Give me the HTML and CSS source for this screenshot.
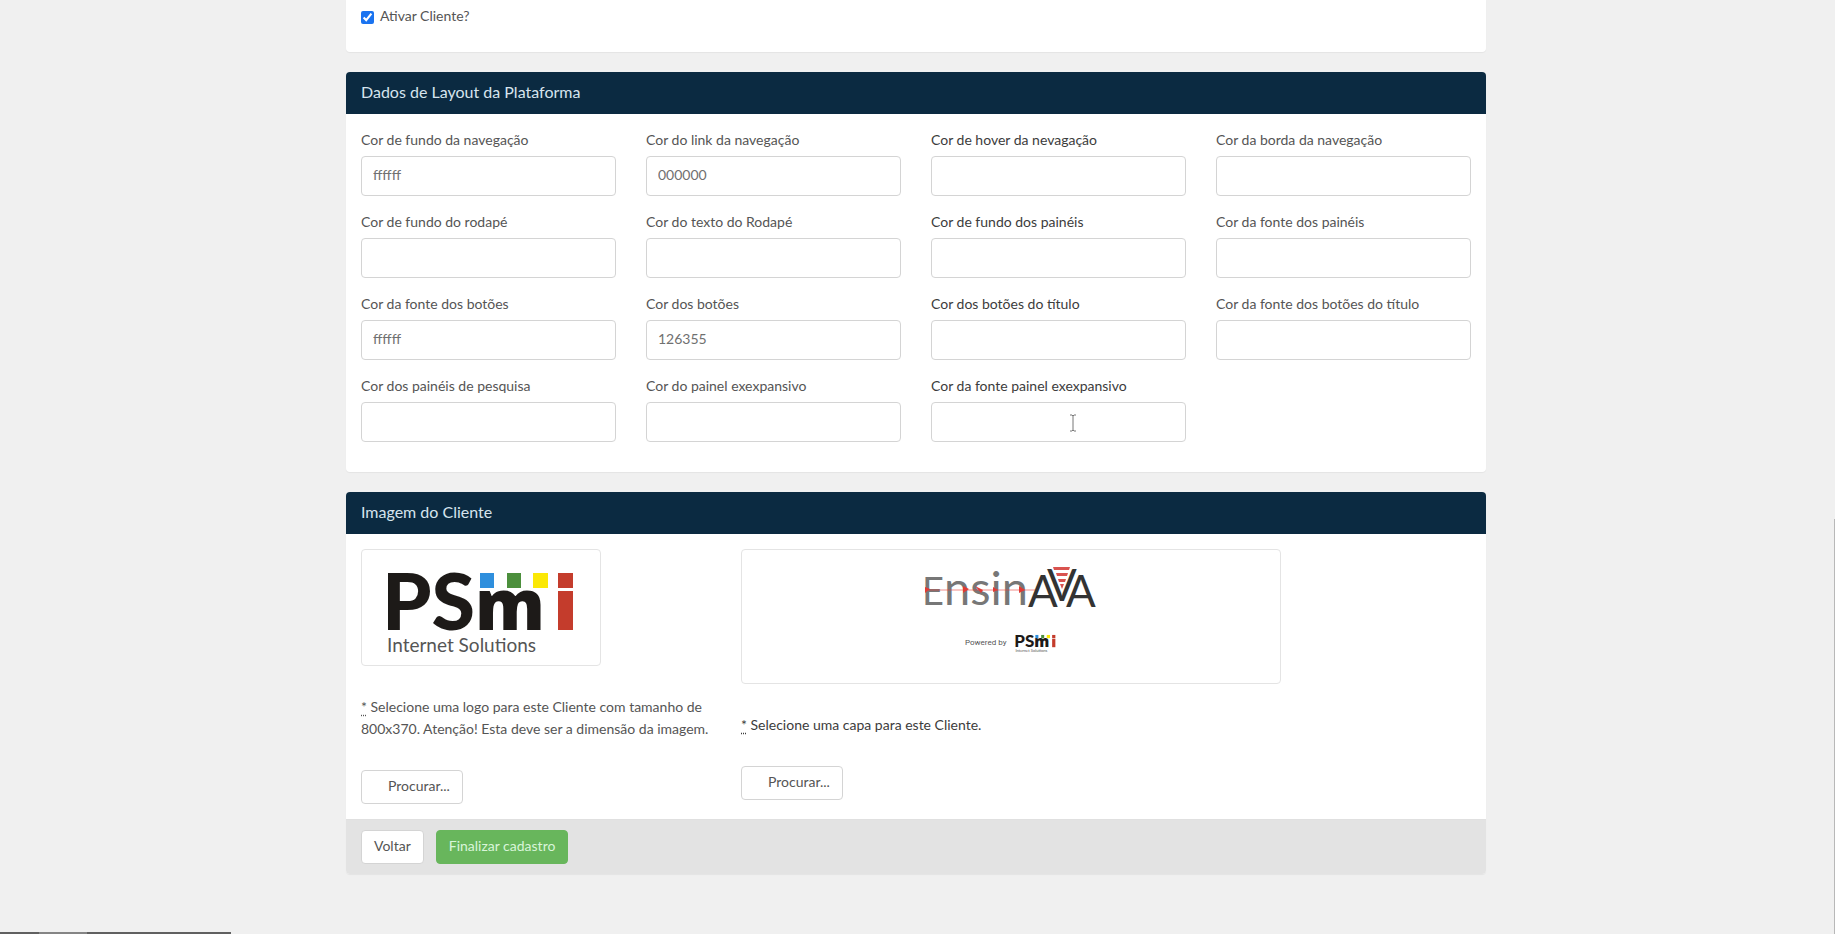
FILE: index.html
```html
<!DOCTYPE html>
<html lang="pt-BR">
<head>
    <meta charset="UTF-8">
    <meta name="viewport" content="width=device-width, initial-scale=1.0">
    <title>Cadastro de Cliente</title>
    <link rel="stylesheet" href="styles.css">
</head>
<body>
    <form class="container">
        <div class="panel panel-first">
            <label class="checkbox" for="ativar"><input type="checkbox" id="ativar" checked> Ativar Cliente?</label>
        </div>

        <div class="panel">
            <h3 class="panel-heading">Dados de Layout da Plataforma</h3>
            <div class="panel-body field-grid">
                <div class="form-group">
                    <label for="nav-fundo">Cor de fundo da navegação</label>
                    <input type="text" id="nav-fundo" value="ffffff">
                </div>
                <div class="form-group">
                    <label for="nav-link">Cor do link da navegação</label>
                    <input type="text" id="nav-link" value="000000">
                </div>
                <div class="form-group">
                    <label for="nav-hover">Cor de hover da nevagação</label>
                    <input type="text" id="nav-hover">
                </div>
                <div class="form-group">
                    <label for="nav-borda">Cor da borda da navegação</label>
                    <input type="text" id="nav-borda">
                </div>
                <div class="form-group">
                    <label for="rodape-fundo">Cor de fundo do rodapé</label>
                    <input type="text" id="rodape-fundo">
                </div>
                <div class="form-group">
                    <label for="rodape-texto">Cor do texto do Rodapé</label>
                    <input type="text" id="rodape-texto">
                </div>
                <div class="form-group">
                    <label for="painel-fundo">Cor de fundo dos painéis</label>
                    <input type="text" id="painel-fundo">
                </div>
                <div class="form-group">
                    <label for="painel-fonte">Cor da fonte dos painéis</label>
                    <input type="text" id="painel-fonte">
                </div>
                <div class="form-group">
                    <label for="botao-fonte">Cor da fonte dos botões</label>
                    <input type="text" id="botao-fonte" value="ffffff">
                </div>
                <div class="form-group">
                    <label for="botao-cor">Cor dos botões</label>
                    <input type="text" id="botao-cor" value="126355">
                </div>
                <div class="form-group">
                    <label for="titulo-botao">Cor dos botões do título</label>
                    <input type="text" id="titulo-botao">
                </div>
                <div class="form-group">
                    <label for="titulo-fonte">Cor da fonte dos botões do título</label>
                    <input type="text" id="titulo-fonte">
                </div>
                <div class="form-group">
                    <label for="pesquisa">Cor dos painéis de pesquisa</label>
                    <input type="text" id="pesquisa">
                </div>
                <div class="form-group">
                    <label for="expansivo">Cor do painel exexpansivo</label>
                    <input type="text" id="expansivo">
                </div>
                <div class="form-group">
                    <label for="expansivo-fonte">Cor da fonte painel exexpansivo</label>
                    <input type="text" id="expansivo-fonte">
                    <svg class="cursor" width="8" height="18" viewBox="0 0 8 18" aria-hidden="true">
                        <path d="M1 1h2l1 1 1-1h2M4 2v14M1 17h2l1-1 1 1h2" fill="none" stroke="#777"/>
                    </svg>
                </div>
            </div>
        </div>

        <div class="panel">
            <h3 class="panel-heading">Imagem do Cliente</h3>
            <div class="panel-body image-row">
                <div class="image-col">
                    <div class="thumbnail thumbnail-logo">
                        <svg viewBox="0 0 238 115" role="img" aria-label="PSmi Internet Solutions">
                            <g id="psmi">
                                <text class="logo-bold" x="20" y="80">PS</text>
                                <text class="logo-m" x="113" y="80">m</text>
                                <rect x="118" y="23" width="14" height="15" fill="#2f8fdd"/>
                                <rect x="145" y="23" width="14" height="15" fill="#4c8f3c"/>
                                <rect x="171" y="23" width="15" height="15" fill="#fbe806"/>
                                <rect x="196" y="23" width="15" height="15" fill="#c43c2c"/>
                                <rect x="196" y="41" width="15" height="39" fill="#c43c2c"/>
                                <text class="logo-sub" x="25" y="102">Internet Solutions</text>
                            </g>
                        </svg>
                    </div>
                    <p class="help"><abbr title="Obrigatório">*</abbr> Selecione uma logo para este Cliente com tamanho de 800x370. Atenção! Esta deve ser a dimensão da imagem.</p>
                    <button type="button" class="btn btn-file">Procurar...</button>
                </div>
                <div class="image-col image-col-wide">
                    <div class="thumbnail thumbnail-capa">
                        <svg viewBox="0 0 538 133" role="img" aria-label="EnsinAVA">
                            <text class="ensin" x="180" y="55">E<tspan class="ensin-small">nsin</tspan></text>
                            <path d="M183 40h110" stroke="#e8403a" stroke-opacity=".6"/>
                            <path d="M183 37l5 2-5 4zM221 36l6 3-6 4zM233 36l8 4-2 3zM251 37l5 3-5 2zM277 36l6 4-6 3z" fill="#e03a34"/>
                            <text class="ava" x="286" y="57">A</text>
                            <text class="ava" x="305" y="51">V</text>
                            <text class="ava" x="324" y="57">A</text>
                            <path d="M311 17h17l-1 3h-15zM314 23h12l-1 3h-10zM316 29h8l-1 3h-6zM318 34h4l-2 5z" fill="#d9534f"/>
                            <text class="powered" x="223" y="95">Powered by</text>
                            <use href="#psmi" transform="translate(268 80) scale(.215)"/>
                        </svg>
                    </div>
                    <p class="help help-dark"><abbr title="Obrigatório">*</abbr> Selecione uma capa para este Cliente.</p>
                    <button type="button" class="btn btn-file">Procurar...</button>
                </div>
            </div>
            <div class="panel-footer">
                <button type="button" class="btn">Voltar</button>
                <button type="submit" class="btn btn-success">Finalizar cadastro</button>
            </div>
        </div>
    </form>

    <div class="scroll-thumb"></div>
    <div class="status-bar"><span></span></div>
</body>
</html>
```
FILE: styles.css
```css
* {
    box-sizing: border-box;
}

body {
    margin: 0;
    padding-right: 3px;
    background-color: #f0f0f0;
    color: #555;
    font-family: Lato, sans-serif;
    font-size: 14px;
    line-height: 22px;
}

.container {
    max-width: 1140px;
    margin: 0 auto;
}

.panel {
    margin-bottom: 20px;
    background-color: #fff;
    border-radius: 4px;
    box-shadow: 0 1px 1px rgba(0, 0, 0, 0.05);
}

.panel-first {
    padding: 5px 15px 25px;
    border-radius: 0 0 4px 4px;
}

.checkbox {
    display: flex;
    align-items: center;
    gap: 6px;
}

.checkbox input {
    width: 13px;
    height: 13px;
    margin: 2px 0 0;
    accent-color: #1a73f0;
}

.panel-heading {
    margin: 0;
    padding: 9px 15px 11px;
    background-color: #0b2a41;
    border-radius: 4px 4px 0 0;
    color: #d6e4ee;
    font-size: 16px;
    font-weight: 400;
}

.panel-body {
    padding: 15px;
}

.field-grid {
    display: grid;
    grid-template-columns: repeat(4, 1fr);
    column-gap: 30px;
}

.form-group {
    position: relative;
    margin-bottom: 15px;
}

.form-group label {
    display: block;
    margin-bottom: 5px;
}

.form-group:nth-child(4n+3) label,
.help-dark {
    color: #3c3c3c;
}

.form-group input {
    display: block;
    width: 100%;
    height: 40px;
    padding: 0 11px 3px;
    border: 1px solid #d4d4d4;
    border-radius: 4px;
    background-color: #fff;
    color: #707070;
    font: inherit;
}

/* text cursor over the last field */
.cursor {
    position: absolute;
    left: 138px;
    top: 39px;
}

.image-row {
    display: flex;
    align-items: flex-start;
    gap: 30px;
}

.image-col {
    width: 350px;
}

.image-col-wide {
    width: 540px;
}

.thumbnail {
    border: 1px solid #e4e4e4;
    border-radius: 4px;
}

.thumbnail svg {
    display: block;
    width: 100%;
}

.thumbnail-logo {
    width: 240px;
}

.logo-bold {
    fill: #1d1a18;
    font-size: 79px;
    font-weight: 900;
}

.logo-m {
    fill: #1d1a18;
    font-family: "Open Sans", sans-serif;
    font-size: 70px;
    font-weight: 800;
}

.logo-sub {
    fill: #555;
    font-size: 19px;
}

.ensin {
    fill: #777;
    font-size: 38px;
}

.ensin-small {
    font-size: 47px;
}

.ava {
    fill: #333;
    font-size: 44px;
}

.powered {
    fill: #555;
    font-family: Roboto, sans-serif;
    font-size: 8px;
}

.help {
    margin: 30px 0;
}

.help abbr {
    text-decoration: underline dotted;
    text-underline-offset: 3px;
}

.btn {
    height: 34px;
    padding: 0 12px 2px;
    border: 1px solid #d4d4d4;
    border-radius: 4px;
    background-color: #fff;
    color: #555;
    font: inherit;
    cursor: pointer;
}

.btn-file {
    display: block;
    padding-left: 26px;
}

.btn-success {
    border-color: #68b65c;
    background-color: #68b65c;
    color: #d9f5d9;
}

.panel-footer {
    display: flex;
    gap: 12px;
    padding: 10px 15px;
    border-top: 1px solid #e0e0e0;
    border-radius: 0 0 4px 4px;
    background-color: #e3e3e3;
}

.scroll-thumb {
    position: fixed;
    right: 0;
    bottom: 0;
    width: 1px;
    height: 415px;
    background-color: #b8b8b8;
}

.status-bar {
    position: fixed;
    left: 0;
    bottom: 0;
    width: 231px;
    height: 2px;
    padding-left: 39px;
    background-color: #606060;
}

.status-bar span {
    display: block;
    width: 48px;
    height: 2px;
    background-color: #858585;
}
```
